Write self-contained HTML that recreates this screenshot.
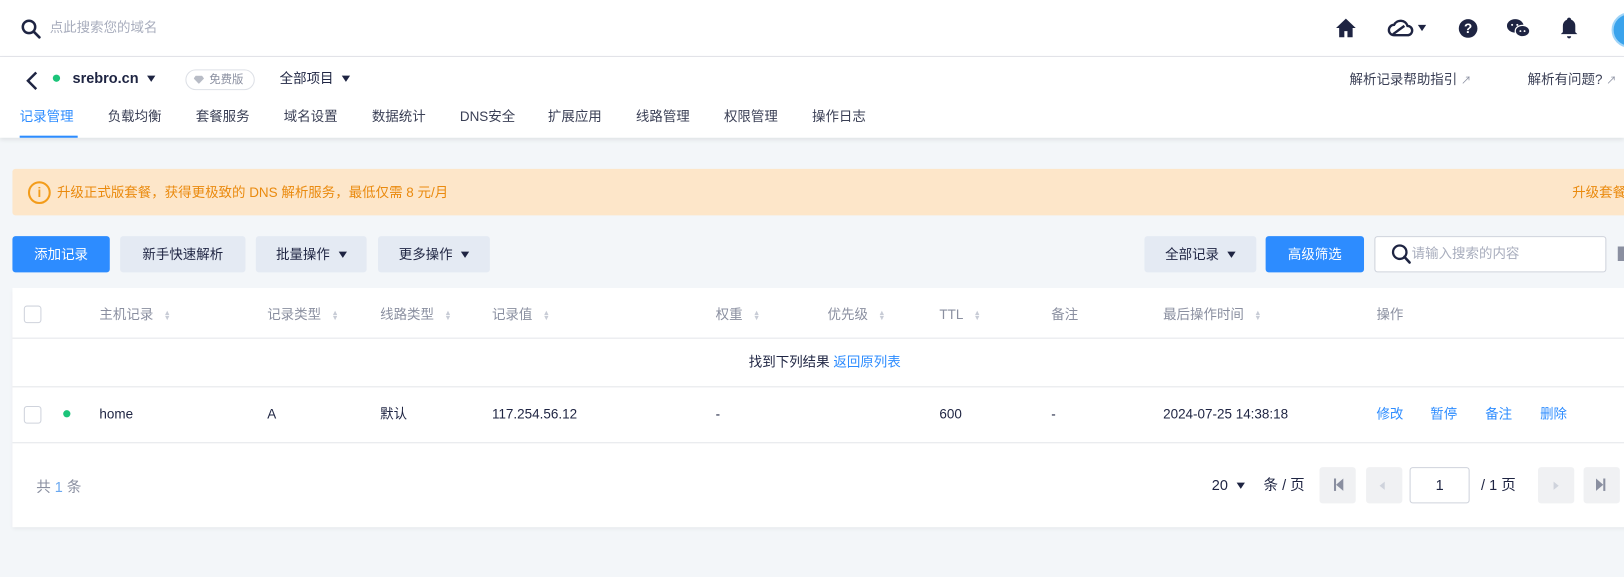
<!DOCTYPE html>
<html><head><meta charset="utf-8"><style>
*{margin:0;padding:0;box-sizing:border-box}
html,body{width:1624px;height:577px;overflow:hidden;background:#f3f6f9}
#w{position:absolute;left:0;top:0;width:1568px;height:557px;transform:scale(1.0357);transform-origin:0 0;font-family:"Liberation Sans","Noto Sans CJK SC",sans-serif;font-size:13px;color:#1e2442}
.a{position:absolute;white-space:nowrap;line-height:18px}
.top{left:0;top:0;width:1568px;height:55px;background:#fff;border-bottom:1px solid #e2e4ea}
.sub{left:0;top:55px;width:1568px;height:78px;background:#fff;box-shadow:0 2px 4px rgba(0,0,0,.08)}
.tab{top:104px;font-size:13px;color:#3a3f55}
.btn{top:228px;height:35px;border-radius:3px;background:#e4eaf3;text-align:center;line-height:35px;font-size:13px;color:#1e2442}
.tri{display:inline-block;width:0;height:0;border-left:4px solid transparent;border-right:4px solid transparent;border-top:6px solid #1e2442;margin-left:8px;vertical-align:1px}
.th{top:295px;color:#8a8fa0}
.sort{display:inline-block;margin-left:10px;font-size:7px;line-height:5px;color:#c8ccd6;vertical-align:middle}
.td{top:391px;color:#1e2442}
.cb{width:17px;height:17px;border:1px solid #cfd3dc;border-radius:3px;background:#fff}
.pg{top:451px;width:35px;height:35px;background:#f0f1f3;border-radius:3px}
.lk{color:#2d8cff}
</style></head><body><div id="w">
<div class="a top"></div>
<svg class="a" style="left:20px;top:18px" width="20" height="20" viewBox="0 0 20 20"><circle cx="8" cy="8" r="6" fill="none" stroke="#1e2442" stroke-width="2.4"/><path d="M12.5 12.5L18 18" stroke="#1e2442" stroke-width="2.6" stroke-linecap="round"/></svg>
<div class="a" style="left:48px;top:18px;color:#a8adbd;font-size:13px">点此搜索您的域名</div>
<svg class="a" style="left:1289px;top:17px" width="21" height="20" viewBox="0 0 21 20"><path d="M10.5 1L1 10h3v9h5v-6h3v6h5v-9h3z" fill="#1e2442"/></svg>
<svg class="a" style="left:1339px;top:17px" width="26" height="20" viewBox="0 0 26 20"><path d="M7 17h13a4.5 4.5 0 0 0 0-9 7 7 0 0 0-13-1A5 5 0 0 0 7 17z M6 16L17 8" fill="none" stroke="#1e2442" stroke-width="2.3"/></svg>
<div class="a" style="left:1369px;top:24px;border-left:4px solid transparent;border-right:4px solid transparent;border-top:6px solid #1e2442"></div>
<svg class="a" style="left:1408px;top:18px" width="19" height="19" viewBox="0 0 19 19"><circle cx="9.5" cy="9.5" r="9" fill="#1e2442"/><text x="9.5" y="14" text-anchor="middle" fill="#fff" font-size="13" font-weight="bold" font-family="Liberation Sans">?</text></svg>
<svg class="a" style="left:1455px;top:18px" width="22" height="19" viewBox="0 0 22 19"><ellipse cx="8" cy="7" rx="8" ry="6.5" fill="#1e2442"/><ellipse cx="15" cy="12" rx="7" ry="5.5" fill="#1e2442" stroke="#fff" stroke-width="1.2"/><circle cx="5" cy="6" r="1" fill="#fff"/><circle cx="10" cy="6" r="1" fill="#fff"/><circle cx="13" cy="12" r=".9" fill="#fff"/><circle cx="17" cy="12" r=".9" fill="#fff"/></svg>
<svg class="a" style="left:1506px;top:16px" width="18" height="22" viewBox="0 0 18 22"><path d="M9 1a2 2 0 0 1 2 2 6 6 0 0 1 4 6v6l2 2H1l2-2V9a6 6 0 0 1 4-6 2 2 0 0 1 2-2z" fill="#1e2442"/><path d="M7 19h4a2 2 0 0 1-4 0z" fill="#1e2442"/></svg>
<div class="a" style="left:1556px;top:12px;width:34px;height:34px;border-radius:50%;background:#3aa3ec;border:2px solid #9fd4f8"></div>

<div class="a sub"></div>
<svg class="a" style="left:25px;top:68px" width="12" height="20" viewBox="0 0 12 20"><path d="M10 2L2 10l8 8" fill="none" stroke="#1e2442" stroke-width="2.4"/></svg>
<div class="a" style="left:51px;top:72px;width:7px;height:7px;border-radius:50%;background:#1cc47a"></div>
<div class="a" style="left:70px;top:66px;font-size:14px;font-weight:bold">srebro.cn<span class="tri" style="margin-left:8px"></span></div>
<div class="a" style="left:179px;top:67px;width:67px;height:20px;border:1px solid #dde0e6;border-radius:10px;font-size:11px;color:#8a8fa0;line-height:18px;padding-left:22px">免费版</div>
<div class="a" style="left:187px;top:73px;width:10px;height:8px;background:#b8bcc6;clip-path:polygon(20% 0,80% 0,100% 35%,50% 100%,0 35%)"></div>
<div class="a" style="left:270px;top:67px;font-size:13px">全部项目<span class="tri"></span></div>
<div class="a" style="left:1303px;top:68px;font-size:13px;color:#3a3f55">解析记录帮助指引 <span style="color:#8a8fa0;font-size:10px">↗</span></div>
<div class="a" style="left:1475px;top:68px;font-size:13px;color:#3a3f55">解析有问题? <span style="color:#8a8fa0;font-size:10px">↗</span></div>
<div class="a tab" style="left:19px;color:#2d8cff">记录管理</div>
<div class="a" style="left:19px;top:131px;width:56px;height:2px;background:#2d8cff"></div>
<div class="a tab" style="left:104px">负载均衡</div>
<div class="a tab" style="left:189px">套餐服务</div>
<div class="a tab" style="left:274px">域名设置</div>
<div class="a tab" style="left:359px">数据统计</div>
<div class="a tab" style="left:444px">DNS安全</div>
<div class="a tab" style="left:529px">扩展应用</div>
<div class="a tab" style="left:614px">线路管理</div>
<div class="a tab" style="left:699px">权限管理</div>
<div class="a tab" style="left:784px">操作日志</div>

<div class="a" style="left:12px;top:163px;width:1612px;height:45px;background:#fde6c9;border-radius:3px 0 0 3px"></div>
<div class="a" style="left:27px;top:175px;width:22px;height:22px;border-radius:50%;border:2.5px solid #f39c1a;color:#f39c1a;font-weight:bold;font-size:13px;text-align:center;line-height:17px">i</div>
<div class="a" style="left:55px;top:177px;color:#ea8a0e">升级正式版套餐，获得更极致的 DNS 解析服务，最低仅需 8 元/月</div>
<div class="a" style="left:1518px;top:177px;color:#ea8a0e">升级套餐</div>

<div class="a btn" style="left:12px;width:94px;background:#2d8cff;color:#fff">添加记录</div>
<div class="a btn" style="left:116px;width:121px">新手快速解析</div>
<div class="a btn" style="left:247px;width:107px">批量操作<span class="tri"></span></div>
<div class="a btn" style="left:365px;width:108px">更多操作<span class="tri"></span></div>
<div class="a btn" style="left:1105px;width:108px">全部记录<span class="tri"></span></div>
<div class="a btn" style="left:1222px;width:95px;background:#2d8cff;color:#fff">高级筛选</div>
<div class="a" style="left:1327px;top:228px;width:224px;height:35px;background:#fff;border:1px solid #cfd3dc;border-radius:3px"></div>
<svg class="a" style="left:1343px;top:235px" width="20" height="21" viewBox="0 0 20 21"><circle cx="8.5" cy="8.5" r="6.5" fill="none" stroke="#1e2442" stroke-width="2.2"/><path d="M13 13l5 5.5" stroke="#1e2442" stroke-width="2.5" stroke-linecap="round"/></svg>
<div class="a" style="left:1363px;top:236px;color:#a8adbd">请输入搜索的内容</div>
<div class="a" style="left:1562px;top:238px;width:8px;height:14px;background:#8a8fa0"></div>

<div class="a" style="left:12px;top:278px;width:1612px;height:231px;background:#fff;box-shadow:0 2px 4px rgba(0,0,0,.06)"></div>
<div class="a" style="left:12px;top:326px;width:1612px;height:1px;background:#e4e6ea"></div>
<div class="a" style="left:12px;top:373px;width:1612px;height:1px;background:#e4e6ea"></div>
<div class="a" style="left:12px;top:427px;width:1612px;height:1px;background:#e4e6ea"></div>
<div class="a cb" style="left:23px;top:295px"></div>
<div class="a th" style="left:96px">主机记录<span class="sort">▲<br>▼</span></div>
<div class="a th" style="left:258px">记录类型<span class="sort">▲<br>▼</span></div>
<div class="a th" style="left:367px">线路类型<span class="sort">▲<br>▼</span></div>
<div class="a th" style="left:475px">记录值<span class="sort">▲<br>▼</span></div>
<div class="a th" style="left:691px">权重<span class="sort">▲<br>▼</span></div>
<div class="a th" style="left:799px">优先级<span class="sort">▲<br>▼</span></div>
<div class="a th" style="left:907px">TTL<span class="sort">▲<br>▼</span></div>
<div class="a th" style="left:1015px">备注</div>
<div class="a th" style="left:1123px">最后操作时间<span class="sort">▲<br>▼</span></div>
<div class="a th" style="left:1329px">操作</div>
<div class="a" style="left:723px;top:341px">找到下列结果 <span class="lk">返回原列表</span></div>
<div class="a cb" style="left:23px;top:392px"></div>
<div class="a" style="left:61px;top:396px;width:7px;height:7px;border-radius:50%;background:#1cc47a"></div>
<div class="a td" style="left:96px">home</div>
<div class="a td" style="left:258px">A</div>
<div class="a td" style="left:367px">默认</div>
<div class="a td" style="left:475px">117.254.56.12</div>
<div class="a td" style="left:691px">-</div>
<div class="a td" style="left:907px">600</div>
<div class="a td" style="left:1015px">-</div>
<div class="a td" style="left:1123px">2024-07-25 14:38:18</div>
<div class="a td lk" style="left:1329px">修改</div>
<div class="a td lk" style="left:1381px">暂停</div>
<div class="a td lk" style="left:1434px">备注</div>
<div class="a td lk" style="left:1487px">删除</div>
<div class="a" style="left:35px;top:461px;font-size:14px;color:#8a8fa0">共 <span style="color:#6aa8f0">1</span> 条</div>
<div class="a" style="left:1170px;top:459px;font-size:14px">20<span class="tri"></span></div>
<div class="a" style="left:1220px;top:459px;font-size:14px">条 / 页</div>
<div class="a pg" style="left:1274px"></div>
<div class="a" style="left:1288px;top:462px;width:2px;height:12px;background:#8a8fa0"></div>
<div class="a" style="left:1290px;top:462px;border-top:6px solid transparent;border-bottom:6px solid transparent;border-right:7px solid #8a8fa0"></div>
<div class="a pg" style="left:1319px"></div>
<div class="a" style="left:1332px;top:465px;border-top:4px solid transparent;border-bottom:4px solid transparent;border-right:5px solid #cfd3dc"></div>
<div class="a" style="left:1361px;top:451px;width:58px;height:35px;border:1px solid #cfd3dc;border-radius:3px;background:#fff;text-align:center;line-height:33px;font-size:14px">1</div>
<div class="a" style="left:1430px;top:459px;font-size:14px">/ 1 页</div>
<div class="a pg" style="left:1485px"></div>
<div class="a" style="left:1500px;top:465px;border-top:4px solid transparent;border-bottom:4px solid transparent;border-left:5px solid #cfd3dc"></div>
<div class="a pg" style="left:1529px"></div>
<div class="a" style="left:1541px;top:462px;border-top:6px solid transparent;border-bottom:6px solid transparent;border-left:7px solid #8a8fa0"></div>
<div class="a" style="left:1548px;top:462px;width:2px;height:12px;background:#8a8fa0"></div>
</div></body></html>
